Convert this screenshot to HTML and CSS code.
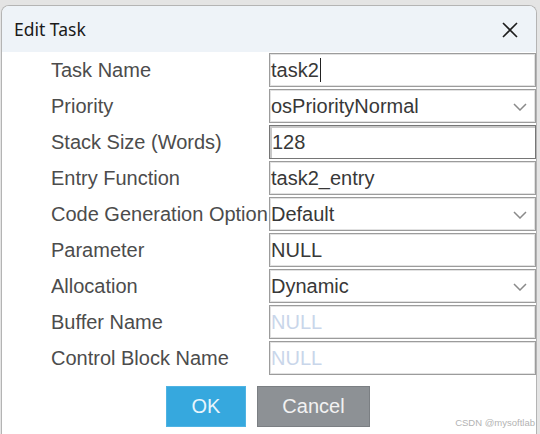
FILE: index.html
```html
<!DOCTYPE html>
<html>
<head>
<meta charset="utf-8">
<link rel="stylesheet" href="styles.css">
</head>
<body>
<div class="dialog">
  <div class="titlebar">
    <span class="title">Edit Task</span>
    <svg class="close" width="16" height="16" viewBox="0 0 16 16"><path d="M1 1 L15 15 M15 1 L1 15" stroke="#1c1c1c" stroke-width="1.6" fill="none"/></svg>
  </div>
  <div class="form">
    <div class="label">Task Name</div>
    <div class="field">task2<span class="caret"></span></div>
    <div class="label">Priority</div>
    <div class="field select">osPriorityNormal<svg class="chev" width="14" height="8" viewBox="0 0 14 8"><path d="M1 1 L7 7 L13 1" stroke="#8a8a8a" stroke-width="1.5" fill="none"/></svg></div>
    <div class="label">Stack Size (Words)</div>
    <div class="field focus">128</div>
    <div class="label">Entry Function</div>
    <div class="field">task2_entry</div>
    <div class="label">Code Generation Option</div>
    <div class="field select">Default<svg class="chev" width="14" height="8" viewBox="0 0 14 8"><path d="M1 1 L7 7 L13 1" stroke="#8a8a8a" stroke-width="1.5" fill="none"/></svg></div>
    <div class="label">Parameter</div>
    <div class="field">NULL</div>
    <div class="label">Allocation</div>
    <div class="field select">Dynamic<svg class="chev" width="14" height="8" viewBox="0 0 14 8"><path d="M1 1 L7 7 L13 1" stroke="#8a8a8a" stroke-width="1.5" fill="none"/></svg></div>
    <div class="label">Buffer Name</div>
    <div class="field placeholder">NULL</div>
    <div class="label">Control Block Name</div>
    <div class="field placeholder">NULL</div>
  </div>
  <div class="buttons">
    <div class="btn ok">OK</div>
    <div class="btn cancel">Cancel</div>
  </div>
  <div class="watermark">CSDN @mysoftlab</div>
</div>
</body>
</html>
```
FILE: styles.css
```css
html, body {
  margin: 0;
  padding: 0;
  width: 540px;
  height: 434px;
  overflow: hidden;
  background: #e4e4e4;
}
body {
  padding-top: 5px;
  box-sizing: border-box;
}
.dialog {
  position: relative;
  margin-left: 1px;
  width: 536px;
  height: 440px;
  box-sizing: border-box;
  background: #ffffff;
  border: 1px solid #b4b4b4;
  border-bottom: none;
  border-radius: 8px 8px 0 0;
  font-family: "Liberation Sans", Arial, sans-serif;
}
.titlebar {
  height: 46px;
  background: #eef3f8;
  border-radius: 7px 7px 0 0;
  display: flex;
  align-items: center;
  justify-content: space-between;
  padding: 0 18px 0 12px;
}
.title {
  font-family: "Noto Sans", sans-serif;
  font-size: 17.5px;
  color: #1a1a1a;
  padding-bottom: 1px;
}
.close {
  display: block;
  margin-top: 1px;
}
.form {
  display: grid;
  grid-template-columns: 218px 267px;
  grid-auto-rows: 36px;
  padding-left: 49px;
  margin-top: 0;
}
.label {
  font-size: 20px;
  color: #4c4c4c;
  display: flex;
  align-items: center;
  white-space: nowrap;
  overflow: hidden;
  padding-top: 1px;
}
.field {
  position: relative;
  margin: 1px 0;
  height: 34px;
  box-sizing: border-box;
  border: 1px solid #9c9c9c;
  box-shadow: inset 0 0 0 1px #e2e2e2;
  display: flex;
  align-items: center;
  padding-left: 1px;
  font-size: 20px;
  color: #383838;
  white-space: nowrap;
}
.field.focus {
  border: 1px solid #767676;
  box-shadow: inset 1px 1px 0 1px #c8c8c8;
  padding-left: 2px;
}
.field.placeholder {
  color: #c9d6ea;
}
.caret {
  display: inline-block;
  width: 1.5px;
  height: 24px;
  background: #222;
  margin-left: 1px;
}
.chev {
  position: absolute;
  right: 8px;
  top: 13px;
}
.buttons {
  display: flex;
  justify-content: center;
  gap: 11px;
  margin-top: 10px;
  padding-right: 2px;
}
.btn {
  height: 41px;
  box-sizing: border-box;
  display: flex;
  align-items: center;
  justify-content: center;
  font-size: 20px;
}
.ok {
  width: 80px;
  background: #36a8de;
  border: 1px solid #4fb3e3;
  color: #e8f5fc;
}
.cancel {
  width: 113px;
  background: #8d9195;
  border: 1px solid #7b7f83;
  color: #f2f2f2;
}
.watermark {
  position: absolute;
  right: 1px;
  top: 411px;
  font-size: 9.5px;
  color: #b3b3b3;
  white-space: nowrap;
}
```
